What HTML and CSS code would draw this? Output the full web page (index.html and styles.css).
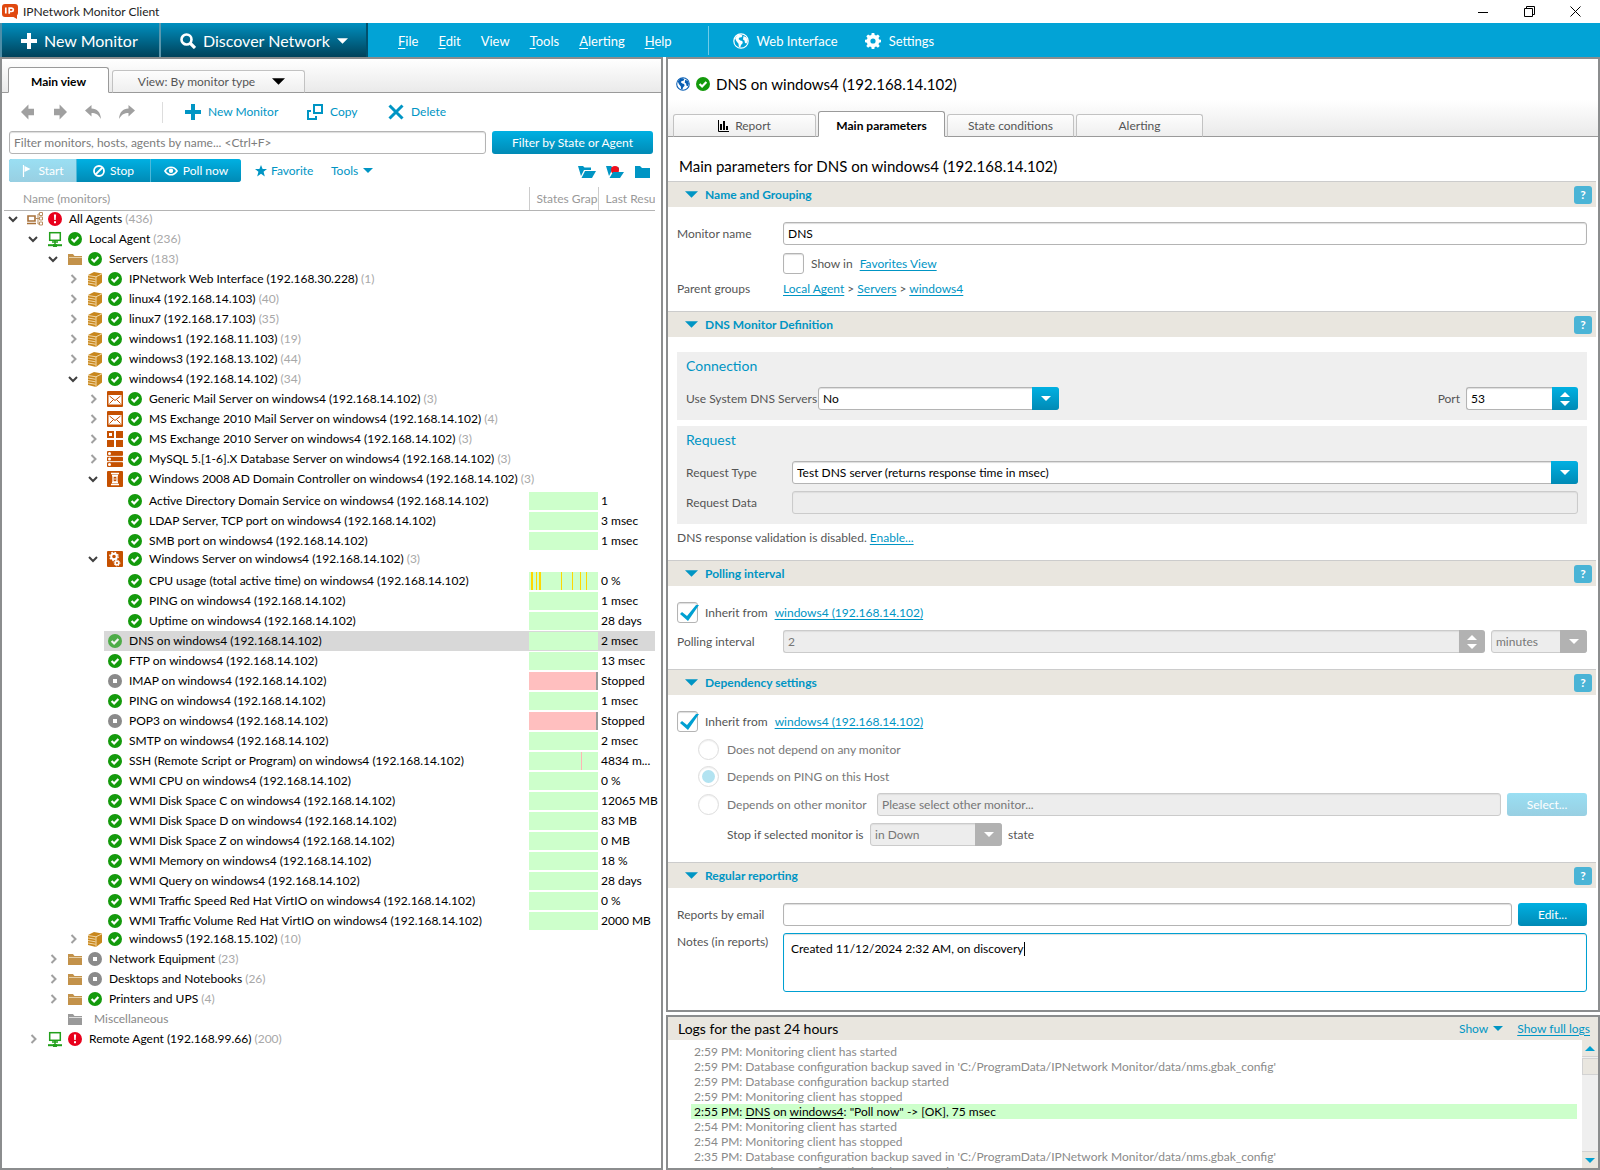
FILE: index.html
```html
<!DOCTYPE html>
<html lang="en">
<head>
<meta charset="utf-8">
<title>IPNetwork Monitor Client</title>
<link rel="stylesheet" href="styles.css">
</head>
<body>
<svg class="sprite" aria-hidden="true">
  <symbol id="i-ok" viewBox="0 0 14 14"><circle cx="7" cy="7" r="7" fill="#149a0c"/><path d="M3.6 7l2.5 2.5L10.4 5" fill="none" stroke="#fff" stroke-width="2.2"/></symbol>
  <symbol id="i-stop" viewBox="0 0 14 14"><circle cx="7" cy="7" r="7" fill="#8a8a8a"/><rect x="5" y="5" width="4" height="4" fill="#fff"/></symbol>
  <symbol id="i-alert" viewBox="0 0 14 14"><circle cx="7" cy="7" r="7" fill="#e8001c"/><path d="M5.9 2.6h2.2l-.4 5.4H6.300z" fill="#fff"/><rect x="6" y="9.200" width="2" height="2" fill="#fff"/></symbol>
  <symbol id="i-down" viewBox="0 0 10 10"><path d="M1 3l4 4 4-4" fill="none" stroke="#404040" stroke-width="2"/></symbol>
  <symbol id="i-right" viewBox="0 0 10 10"><path d="M3.500 1l4 4-4 4" fill="none" stroke="#a0a0a0" stroke-width="2"/></symbol>
  <symbol id="i-net" viewBox="0 0 16 16"><path d="M1 5h7v5H1zM0 12.500h9" fill="none" stroke="#a8713a" stroke-width="1.600"/><path d="M9 7.500h3M11 3v10M11 3h2M11 13h2" fill="none" stroke="#b98f60"/><path d="M12.500 1.500h3v3h-3zM12.500 6h3v3h-3zM12.500 11h3v3h-3z" fill="#fff" stroke="#b98f60"/></symbol>
  <symbol id="i-agent" viewBox="0 0 16 16"><rect x="2.700" y="1.700" width="10.600" height="7.600" fill="#fff" stroke="#22a01c" stroke-width="1.500"/><path d="M8 9.500v4M5 11h6" stroke="#22a01c" stroke-width="1.500"/><path d="M1 14.200h14" stroke="#22a01c" stroke-width="2"/><rect x="6" y="13" width="4" height="3" fill="#22a01c"/></symbol>
  <symbol id="i-folder" viewBox="0 0 16 16"><path d="M1 3h5l1.500 2H15v9H1z" fill="#c3924a"/><path d="M2 6.500h13" stroke="#e6cfa6"/></symbol>
  <symbol id="i-folder-gray" viewBox="0 0 16 16"><path d="M1 3h5l1.500 2H15v9H1z" fill="#9a9a9a"/><path d="M2 6.500h13" stroke="#ddd"/></symbol>
  <symbol id="i-host" viewBox="0 0 16 16"><path d="M1 4l6-3 8 1.500v9L9 16l-8-2z" fill="#c8871d"/><path d="M1 4.500l8 1.300L15 2.800M9 6v10M1 7l7.500 1.300M1 9.500l7.500 1.300M1 12l7.500 1.300" fill="none" stroke="#f5dfb4" stroke-width=".9"/></symbol>
  <symbol id="i-mail" viewBox="0 0 16 16"><rect width="16" height="16" rx="1" fill="#c55000"/><path d="M1.500 4h13v9.500h-13z" fill="#fff"/><path d="M2.500 5l5.500 4.500L13.500 5M2.500 12.500l4-4M13.500 12.500l-4-4" fill="none" stroke="#c55000"/></symbol>
  <symbol id="i-tiles" viewBox="0 0 16 16"><path d="M0 0h7v7H0zM9 0h7v7H9zM0 9h7v7H0zM9 9h7v7H9z" fill="#c55000"/><path d="M2 2h3v3H2z" fill="#fff"/></symbol>
  <symbol id="i-db" viewBox="0 0 16 16"><rect width="16" height="5" rx="1" fill="#c55000"/><rect y="5.600" width="16" height="4.800" rx="1" fill="#c55000"/><rect y="11" width="16" height="5" rx="1" fill="#c55000"/><circle cx="2.500" cy="2.500" r="1.500" fill="#fff"/><circle cx="2.500" cy="8" r="1.500" fill="#fff"/><circle cx="2.500" cy="13.500" r="1.500" fill="#fff"/><path d="M0 5.300h16M0 10.700h16" stroke="#fff" stroke-width=".8"/></symbol>
  <symbol id="i-dc" viewBox="0 0 16 16"><rect width="16" height="16" rx="1" fill="#c55000"/><path d="M4 2.500h8M5 4.500h6M5 11.500h6M4 13.500h8" stroke="#fff" stroke-width="1.400"/><path d="M6 5h4v6H6z" fill="none" stroke="#fff" stroke-width="1.300"/><path d="M7.200 8h1.600" stroke="#fff"/></symbol>
  <symbol id="i-cogs" viewBox="0 0 16 16"><rect width="16" height="16" rx="1" fill="#c55000"/><circle cx="7" cy="5.500" r="2.800" fill="none" stroke="#fff" stroke-width="2"/><circle cx="7" cy="5.500" r="4.200" fill="none" stroke="#fff" stroke-width="1.300" stroke-dasharray="1.600 1.700"/><circle cx="10" cy="12" r="1.800" fill="none" stroke="#fff" stroke-width="1.600"/><circle cx="10" cy="12" r="2.900" fill="none" stroke="#fff" stroke-dasharray="1.200 1.100"/></symbol>
  <symbol id="i-plus" viewBox="0 0 16 16"><path d="M6 0h4v6h6v4h-6v6H6v-6H0V6h6z" fill="currentColor"/></symbol>
  <symbol id="i-caret" viewBox="0 0 10 5"><path d="M0 0h10L5 5z" fill="currentColor"/></symbol>
  <symbol id="i-globe" viewBox="0 0 16 16"><circle cx="8" cy="8" r="7.200" fill="none" stroke="currentColor" stroke-width="1.200"/><path d="M2 5l3-3.500 3 0 1.500 1.200-1 1.500-2 .3-1 1.500 1.800 1.500 2 .5.5 2-1.800 2-.7 2.500-1.500-.8-.3-2.900L3.300 8zM10.500 3l3 1.500 1.300 3-1.300 3-1.500-.5-.5-2.500-1.500-1 .3-2z" fill="currentColor"/></symbol>
  <symbol id="i-gear" viewBox="0 0 16 16"><path d="M6.700 0h2.600l.4 2 1.500.6L12.900 1.500l1.800 1.800-1.200 1.700.6 1.500 2 .3v2.500l-2 .4-.6 1.500 1.200 1.700-1.800 1.800-1.700-1.200-1.500.6-.4 2H6.700l-.4-2-1.500-.6-1.700 1.200-1.800-1.800 1.200-1.700-.6-1.500-2-.4V6.800l2-.3.6-1.500L1.300 3.300l1.800-1.800 1.700 1.100L6.300 2zM8 5.400A2.600 2.600 0 1 0 8 10.600 2.600 2.600 0 1 0 8 5.400z" fill="currentColor" fill-rule="evenodd"/></symbol>
  <symbol id="i-arrow" viewBox="0 0 14 16"><path d="M0 8l8-8v4.500h6v7H8V16z" fill="currentColor"/></symbol>
  <symbol id="i-undo" viewBox="0 0 16 14"><path d="M0 5.500L6.500 0v3.500C12 3.500 15.500 7 16 14 13.500 9.500 10.500 8 6.500 8v3.500z" fill="currentColor"/></symbol>
</svg>

<div class="app">
  <header class="titlebar">
    <svg class="logo" viewBox="0 0 16 15" aria-hidden="true"><path d="M3 0h10a3 3 0 0 1 3 3v6a3 3 0 0 1-1 2.200V15l-3.500-2H3a3 3 0 0 1-3-3V3a3 3 0 0 1 3-3z" fill="#e0480f"/><path d="M3.800 3.500v6M7.200 9.700V4.200h2.500a1.500 1.500 0 0 1 0 3.300H7.200" fill="none" stroke="#fff" stroke-width="1.700"/></svg>
    <h1 class="app-title">IPNetwork Monitor Client</h1>
    <div class="win-buttons">
      <button type="button" aria-label="Minimize"><svg viewBox="0 0 11 11"><path d="M0 6.500h10" stroke="#000"/></svg></button>
      <button type="button" aria-label="Restore"><svg viewBox="0 0 11 11"><path d="M.5 2.500h8v8h-8zM2.500 2.500v-2h8v8h-2" fill="none" stroke="#000"/></svg></button>
      <button type="button" aria-label="Close"><svg viewBox="0 0 11 11"><path d="M.5.5l10 10M10.500.5l-10 10" stroke="#000"/></svg></button>
    </div>
  </header>

  <nav class="mainbar">
    <button type="button" class="big big-new"><svg class="s16"><use href="#i-plus"/></svg>New Monitor</button>
    <button type="button" class="big big-discover"><svg class="s16" viewBox="0 0 16 16"><circle cx="6.500" cy="6.500" r="5" fill="none" stroke="#fff" stroke-width="2.600"/><path d="M10 10l5 5" stroke="#fff" stroke-width="3.200"/></svg>Discover Network<svg class="caret-big"><use href="#i-caret"/></svg></button>
    <ul class="menu">
      <li><a href="#file"><u>F</u>ile</a></li>
      <li><a href="#edit"><u>E</u>dit</a></li>
      <li><a href="#view">View</a></li>
      <li><a href="#tools"><u>T</u>ools</a></li>
      <li><a href="#alerting"><u>A</u>lerting</a></li>
      <li><a href="#help"><u>H</u>elp</a></li>
    </ul>
    <div class="menu-extra">
      <a href="#web"><svg class="s16"><use href="#i-globe"/></svg>Web Interface</a>
      <a href="#settings"><svg class="s16"><use href="#i-gear"/></svg>Settings</a>
    </div>
  </nav>

  <main class="workspace">
    <section class="panel tree-panel">
      <div class="tabs tree-tabs">
        <button type="button" class="tab active">Main view</button>
        <button type="button" class="tab view-tab">View: By monitor type<svg class="caret-tab"><use href="#i-caret"/></svg></button>
      </div>
      <div class="toolbar">
        <div class="nav-icons">
          <button type="button" aria-label="Back"><svg class="w13"><use href="#i-arrow"/></svg></button>
          <button type="button" aria-label="Forward"><svg class="w13 flip"><use href="#i-arrow"/></svg></button>
          <button type="button" aria-label="Undo"><svg class="w16"><use href="#i-undo"/></svg></button>
          <button type="button" aria-label="Redo"><svg class="w16 flip"><use href="#i-undo"/></svg></button>
        </div>
        <button type="button" class="tool tool-new"><svg class="s16"><use href="#i-plus"/></svg>New Monitor</button>
        <button type="button" class="tool tool-copy"><svg class="s16" viewBox="0 0 16 16"><path d="M7 1h8v8H7z" fill="none" stroke="currentColor" stroke-width="2"/><path d="M4 7H1v8h8v-3" fill="none" stroke="currentColor" stroke-width="2"/></svg>Copy</button>
        <button type="button" class="tool"><svg class="s16" viewBox="0 0 16 16"><path d="M1.500 1.500l13 13M14.500 1.500l-13 13" stroke="currentColor" stroke-width="3"/></svg>Delete</button>
      </div>
      <div class="filter-row">
        <input class="field" type="text" aria-label="Filter monitors" placeholder="Filter monitors, hosts, agents by name... &lt;Ctrl+F&gt;">
        <button type="button" class="btn btn-filter">Filter by State or Agent</button>
      </div>
      <div class="action-row">
        <div class="btn-group">
          <button type="button" class="btn btn-start" disabled><svg class="s12" viewBox="0 0 12 12"><path d="M2.500 0v12" stroke="currentColor" stroke-width="1.200"/><path d="M3.500 1l6 3-6 3z" fill="currentColor"/></svg>Start</button>
          <button type="button" class="btn btn-stop"><svg class="s12" viewBox="0 0 12 12"><circle cx="6" cy="6" r="5" fill="none" stroke="currentColor" stroke-width="1.800"/><path d="M2.500 9.500l7-7" stroke="currentColor" stroke-width="1.800"/></svg>Stop</button>
          <button type="button" class="btn btn-poll"><svg class="eye" viewBox="0 0 14 10"><path d="M1 5c3-5 9-5 12 0-3 5-9 5-12 0z" fill="none" stroke="currentColor" stroke-width="1.700"/><circle cx="7" cy="4.700" r="2.200" fill="currentColor"/></svg>Poll now</button>
        </div>
        <button type="button" class="link-btn fav"><svg class="s12" viewBox="0 0 12 12"><path d="M6 0l1.600 4H12L8.600 6.800 9.800 11.500 6 8.800 2.200 11.500 3.400 6.800 0 4h4.400z" fill="currentColor"/></svg>Favorite</button>
        <button type="button" class="link-btn">Tools<svg class="caret-s"><use href="#i-caret"/></svg></button>
        <div class="folder-btns">
          <button type="button" aria-label="Expand"><svg viewBox="0 0 18 12"><path d="M0 0h5l1.500 1.500H13v2.500H6L3 10z" fill="#0095c4"/><path d="M7 5H18l-4 7H3.500z" fill="#0095c4"/></svg></button>
          <button type="button" aria-label="Expand problems"><svg viewBox="0 0 18 12"><path d="M0 0h5l1.500 1.500H13v2.500H6L3 10z" fill="#0095c4"/><circle cx="9" cy="4" r="4" fill="#f0101c"/><path d="M7 6H18l-4 6H3.500z" fill="#0095c4"/></svg></button>
          <button type="button" aria-label="Collapse"><svg viewBox="0 0 18 12"><path d="M1 0h5l2 2h8v10H1z" fill="#0095c4"/></svg></button>
        </div>
      </div>

      <table class="tree">
        <thead><tr><th class="c-name">Name (monitors)</th><th class="c-graph">States Graph</th><th class="c-last">Last Result</th></tr></thead>
        <tbody>
          <tr class="g"><td colspan="3"><div class="node l0"><button class="tw" aria-label="Toggle"><svg><use href="#i-down"/></svg></button><svg class="ic"><use href="#i-net"/></svg><svg class="st"><use href="#i-alert"/></svg>All Agents <span class="n">(436)</span></div></td></tr>
          <tr class="g"><td colspan="3"><div class="node l1"><button class="tw" aria-label="Toggle"><svg><use href="#i-down"/></svg></button><svg class="ic"><use href="#i-agent"/></svg><svg class="st"><use href="#i-ok"/></svg>Local Agent <span class="n">(236)</span></div></td></tr>
          <tr class="g"><td colspan="3"><div class="node l2"><button class="tw" aria-label="Toggle"><svg><use href="#i-down"/></svg></button><svg class="ic"><use href="#i-folder"/></svg><svg class="st"><use href="#i-ok"/></svg>Servers <span class="n">(183)</span></div></td></tr>
          <tr class="g"><td colspan="3"><div class="node l3"><button class="tw" aria-label="Toggle"><svg><use href="#i-right"/></svg></button><svg class="ic"><use href="#i-host"/></svg><svg class="st"><use href="#i-ok"/></svg>IPNetwork Web Interface (192.168.30.228) <span class="n">(1)</span></div></td></tr>
          <tr class="g"><td colspan="3"><div class="node l3"><button class="tw" aria-label="Toggle"><svg><use href="#i-right"/></svg></button><svg class="ic"><use href="#i-host"/></svg><svg class="st"><use href="#i-ok"/></svg>linux4 (192.168.14.103) <span class="n">(40)</span></div></td></tr>
          <tr class="g"><td colspan="3"><div class="node l3"><button class="tw" aria-label="Toggle"><svg><use href="#i-right"/></svg></button><svg class="ic"><use href="#i-host"/></svg><svg class="st"><use href="#i-ok"/></svg>linux7 (192.168.17.103) <span class="n">(35)</span></div></td></tr>
          <tr class="g"><td colspan="3"><div class="node l3"><button class="tw" aria-label="Toggle"><svg><use href="#i-right"/></svg></button><svg class="ic"><use href="#i-host"/></svg><svg class="st"><use href="#i-ok"/></svg>windows1 (192.168.11.103) <span class="n">(19)</span></div></td></tr>
          <tr class="g"><td colspan="3"><div class="node l3"><button class="tw" aria-label="Toggle"><svg><use href="#i-right"/></svg></button><svg class="ic"><use href="#i-host"/></svg><svg class="st"><use href="#i-ok"/></svg>windows3 (192.168.13.102) <span class="n">(44)</span></div></td></tr>
          <tr class="g"><td colspan="3"><div class="node l3"><button class="tw" aria-label="Toggle"><svg><use href="#i-down"/></svg></button><svg class="ic"><use href="#i-host"/></svg><svg class="st"><use href="#i-ok"/></svg>windows4 (192.168.14.102) <span class="n">(34)</span></div></td></tr>
          <tr class="g"><td colspan="3"><div class="node l4"><button class="tw" aria-label="Toggle"><svg><use href="#i-right"/></svg></button><svg class="ic"><use href="#i-mail"/></svg><svg class="st"><use href="#i-ok"/></svg>Generic Mail Server on windows4 (192.168.14.102) <span class="n">(3)</span></div></td></tr>
          <tr class="g"><td colspan="3"><div class="node l4"><button class="tw" aria-label="Toggle"><svg><use href="#i-right"/></svg></button><svg class="ic"><use href="#i-mail"/></svg><svg class="st"><use href="#i-ok"/></svg>MS Exchange 2010 Mail Server on windows4 (192.168.14.102) <span class="n">(4)</span></div></td></tr>
          <tr class="g"><td colspan="3"><div class="node l4"><button class="tw" aria-label="Toggle"><svg><use href="#i-right"/></svg></button><svg class="ic"><use href="#i-tiles"/></svg><svg class="st"><use href="#i-ok"/></svg>MS Exchange 2010 Server on windows4 (192.168.14.102) <span class="n">(3)</span></div></td></tr>
          <tr class="g"><td colspan="3"><div class="node l4"><button class="tw" aria-label="Toggle"><svg><use href="#i-right"/></svg></button><svg class="ic"><use href="#i-db"/></svg><svg class="st"><use href="#i-ok"/></svg>MySQL 5.[1-6].X Database Server on windows4 (192.168.14.102) <span class="n">(3)</span></div></td></tr>
          <tr class="g"><td colspan="3"><div class="node l4"><button class="tw" aria-label="Toggle"><svg><use href="#i-down"/></svg></button><svg class="ic"><use href="#i-dc"/></svg><svg class="st"><use href="#i-ok"/></svg>Windows 2008 AD Domain Controller on windows4 (192.168.14.102) <span class="n">(3)</span></div></td></tr>
          <tr><td><div class="node m4"><svg class="st"><use href="#i-ok"/></svg>Active Directory Domain Service on windows4 (192.168.14.102)</div></td><td><div class="bar"></div></td><td>1</td></tr>
          <tr><td><div class="node m4"><svg class="st"><use href="#i-ok"/></svg>LDAP Server, TCP port on windows4 (192.168.14.102)</div></td><td><div class="bar"></div></td><td>3 msec</td></tr>
          <tr><td><div class="node m4"><svg class="st"><use href="#i-ok"/></svg>SMB port on windows4 (192.168.14.102)</div></td><td><div class="bar"></div></td><td>1 msec</td></tr>
          <tr class="g"><td colspan="3"><div class="node l4"><button class="tw" aria-label="Toggle"><svg><use href="#i-down"/></svg></button><svg class="ic"><use href="#i-cogs"/></svg><svg class="st"><use href="#i-ok"/></svg>Windows Server on windows4 (192.168.14.102) <span class="n">(3)</span></div></td></tr>
          <tr><td><div class="node m4"><svg class="st"><use href="#i-ok"/></svg>CPU usage (total active time) on windows4 (192.168.14.102)</div></td><td><div class="bar"><svg viewBox="0 0 69 18"><path d="M2 0h2v18H2zM7 0h1v18H7zM10 0h2v18h-2zM32 0h1v18h-1zM43 0h1v18h-1zM51 0h1v18h-1zM57 0h1v18h-1z" fill="#ffd800"/></svg></div></td><td>0 %</td></tr>
          <tr><td><div class="node m4"><svg class="st"><use href="#i-ok"/></svg>PING on windows4 (192.168.14.102)</div></td><td><div class="bar"></div></td><td>1 msec</td></tr>
          <tr><td><div class="node m4"><svg class="st"><use href="#i-ok"/></svg>Uptime on windows4 (192.168.14.102)</div></td><td><div class="bar"></div></td><td>28 days</td></tr>
          <tr class="selected"><td><div class="node m3"><svg class="st"><use href="#i-ok"/></svg>DNS on windows4 (192.168.14.102)</div></td><td><div class="bar"></div></td><td>2 msec</td></tr>
          <tr><td><div class="node m3"><svg class="st"><use href="#i-ok"/></svg>FTP on windows4 (192.168.14.102)</div></td><td><div class="bar"></div></td><td>13 msec</td></tr>
          <tr><td><div class="node m3"><svg class="st"><use href="#i-stop"/></svg>IMAP on windows4 (192.168.14.102)</div></td><td><div class="bar stopped"></div></td><td>Stopped</td></tr>
          <tr><td><div class="node m3"><svg class="st"><use href="#i-ok"/></svg>PING on windows4 (192.168.14.102)</div></td><td><div class="bar"></div></td><td>1 msec</td></tr>
          <tr><td><div class="node m3"><svg class="st"><use href="#i-stop"/></svg>POP3 on windows4 (192.168.14.102)</div></td><td><div class="bar stopped"></div></td><td>Stopped</td></tr>
          <tr><td><div class="node m3"><svg class="st"><use href="#i-ok"/></svg>SMTP on windows4 (192.168.14.102)</div></td><td><div class="bar"></div></td><td>2 msec</td></tr>
          <tr><td><div class="node m3"><svg class="st"><use href="#i-ok"/></svg>SSH (Remote Script or Program) on windows4 (192.168.14.102)</div></td><td><div class="bar"><svg viewBox="0 0 69 18"><path d="M52 0h1v18h-1z" fill="#ffb4b4"/></svg></div></td><td>4834 m...</td></tr>
          <tr><td><div class="node m3"><svg class="st"><use href="#i-ok"/></svg>WMI CPU on windows4 (192.168.14.102)</div></td><td><div class="bar"></div></td><td>0 %</td></tr>
          <tr><td><div class="node m3"><svg class="st"><use href="#i-ok"/></svg>WMI Disk Space C on windows4 (192.168.14.102)</div></td><td><div class="bar"></div></td><td>12065 MB</td></tr>
          <tr><td><div class="node m3"><svg class="st"><use href="#i-ok"/></svg>WMI Disk Space D on windows4 (192.168.14.102)</div></td><td><div class="bar"></div></td><td>83 MB</td></tr>
          <tr><td><div class="node m3"><svg class="st"><use href="#i-ok"/></svg>WMI Disk Space Z on windows4 (192.168.14.102)</div></td><td><div class="bar"></div></td><td>0 MB</td></tr>
          <tr><td><div class="node m3"><svg class="st"><use href="#i-ok"/></svg>WMI Memory on windows4 (192.168.14.102)</div></td><td><div class="bar"></div></td><td>18 %</td></tr>
          <tr><td><div class="node m3"><svg class="st"><use href="#i-ok"/></svg>WMI Query on windows4 (192.168.14.102)</div></td><td><div class="bar"></div></td><td>28 days</td></tr>
          <tr><td><div class="node m3"><svg class="st"><use href="#i-ok"/></svg>WMI Traffic Speed Red Hat VirtIO on windows4 (192.168.14.102)</div></td><td><div class="bar"></div></td><td>0 %</td></tr>
          <tr><td><div class="node m3"><svg class="st"><use href="#i-ok"/></svg>WMI Traffic Volume Red Hat VirtIO on windows4 (192.168.14.102)</div></td><td><div class="bar"></div></td><td>2000 MB</td></tr>
          <tr class="g"><td colspan="3"><div class="node l3"><button class="tw" aria-label="Toggle"><svg><use href="#i-right"/></svg></button><svg class="ic"><use href="#i-host"/></svg><svg class="st"><use href="#i-ok"/></svg>windows5 (192.168.15.102) <span class="n">(10)</span></div></td></tr>
          <tr class="g"><td colspan="3"><div class="node l2"><button class="tw" aria-label="Toggle"><svg><use href="#i-right"/></svg></button><svg class="ic"><use href="#i-folder"/></svg><svg class="st"><use href="#i-stop"/></svg>Network Equipment <span class="n">(23)</span></div></td></tr>
          <tr class="g"><td colspan="3"><div class="node l2"><button class="tw" aria-label="Toggle"><svg><use href="#i-right"/></svg></button><svg class="ic"><use href="#i-folder"/></svg><svg class="st"><use href="#i-stop"/></svg>Desktops and Notebooks <span class="n">(26)</span></div></td></tr>
          <tr class="g"><td colspan="3"><div class="node l2"><button class="tw" aria-label="Toggle"><svg><use href="#i-right"/></svg></button><svg class="ic"><use href="#i-folder"/></svg><svg class="st"><use href="#i-ok"/></svg>Printers and UPS <span class="n">(4)</span></div></td></tr>
          <tr class="g empty"><td colspan="3"><div class="node l2"><span class="tw"></span><svg class="ic"><use href="#i-folder-gray"/></svg>Miscellaneous</div></td></tr>
          <tr class="g"><td colspan="3"><div class="node l1"><button class="tw" aria-label="Toggle"><svg><use href="#i-right"/></svg></button><svg class="ic"><use href="#i-agent"/></svg><svg class="st"><use href="#i-alert"/></svg>Remote Agent (192.168.99.66) <span class="n">(200)</span></div></td></tr>
        </tbody>
      </table>
    </section>

    <div class="right">
      <section class="panel details">
        <div class="object-title"><svg class="globe"><use href="#i-globe"/></svg><svg class="st"><use href="#i-ok"/></svg><h2>DNS on windows4 (192.168.14.102)</h2></div>
        <div class="tabs detail-tabs">
          <button type="button" class="tab report-tab"><svg class="s11" viewBox="0 0 11 12"><path d="M.5 0v11.500H11" fill="none" stroke="#000"/><path d="M2 4h2v6H2zM5 1h2v9H5zM8 6h2v4H8z"/></svg>Report</button>
          <button type="button" class="tab active">Main parameters</button>
          <button type="button" class="tab">State conditions</button>
          <button type="button" class="tab">Alerting</button>
        </div>
        <h3 class="form-title">Main parameters for DNS on windows4 (192.168.14.102)</h3>

        <div class="sec-head"><button type="button" class="sec-toggle"><svg class="caret-sec"><use href="#i-caret"/></svg>Name and Grouping</button><button type="button" class="help" aria-label="Help">?</button></div>
        <div class="sec-body">
          <div class="row"><label for="mon-name">Monitor name</label><input id="mon-name" class="field" type="text" value="DNS"></div>
          <div class="row gap8"><span></span><div class="inline"><input type="checkbox" id="fav" class="check"><label for="fav">Show in</label><a href="#favorites">Favorites View</a></div></div>
          <div class="row gap6 text-row"><span>Parent groups</span><div><a href="#local">Local Agent</a> &gt; <a href="#servers">Servers</a> &gt; <a href="#windows4">windows4</a></div></div>
        </div>

        <div class="sec-head"><button type="button" class="sec-toggle"><svg class="caret-sec"><use href="#i-caret"/></svg>DNS Monitor Definition</button><button type="button" class="help" aria-label="Help">?</button></div>
        <div class="sec-body">
          <div class="box">
            <h4>Connection</h4>
            <div class="conn">
              <label for="sysdns" class="sysdns-label">Use System DNS Servers</label>
              <div class="combo combo-dns"><select id="sysdns"><option>No</option></select><span class="arrow"><svg class="caret-s"><use href="#i-caret"/></svg></span></div>
              <label for="port" class="port-label">Port</label>
              <div class="spin spin-port"><input id="port" type="text" inputmode="numeric" value="53"><button type="button" aria-label="Change port"><svg class="caret-s up"><use href="#i-caret"/></svg><svg class="caret-s"><use href="#i-caret"/></svg></button></div>
            </div>
          </div>
          <div class="box gap6">
            <h4>Request</h4>
            <div class="row"><label for="rtype">Request Type</label><div class="combo"><select id="rtype"><option>Test DNS server (returns response time in msec)</option></select><span class="arrow"><svg class="caret-s"><use href="#i-caret"/></svg></span></div></div>
            <div class="row gap7"><label for="rdata">Request Data</label><input id="rdata" class="field" type="text" disabled></div>
          </div>
          <p class="note">DNS response validation is disabled. <a href="#enable">Enable...</a></p>
        </div>

        <div class="sec-head"><button type="button" class="sec-toggle"><svg class="caret-sec"><use href="#i-caret"/></svg>Polling interval</button><button type="button" class="help" aria-label="Help">?</button></div>
        <div class="sec-body even">
          <div class="inline"><input type="checkbox" id="inh1" class="check" checked><label for="inh1">Inherit from</label><a href="#windows4">windows4 (192.168.14.102)</a></div>
          <div class="row gap7"><label for="poll">Polling interval</label>
            <div class="poll">
              <div class="spin off"><input id="poll" type="text" value="2" disabled><button type="button" disabled aria-label="Change interval"><svg class="caret-s up"><use href="#i-caret"/></svg><svg class="caret-s"><use href="#i-caret"/></svg></button></div>
              <div class="combo off combo-unit"><select aria-label="Interval unit" disabled><option>minutes</option></select><span class="arrow"><svg class="caret-s"><use href="#i-caret"/></svg></span></div>
            </div>
          </div>
        </div>

        <div class="sec-head"><button type="button" class="sec-toggle"><svg class="caret-sec"><use href="#i-caret"/></svg>Dependency settings</button><button type="button" class="help" aria-label="Help">?</button></div>
        <div class="sec-body even">
          <div class="inline"><input type="checkbox" id="inh2" class="check" checked><label for="inh2">Inherit from</label><a href="#windows4">windows4 (192.168.14.102)</a></div>
          <div class="dep">
            <div class="dep-row gap7"><input type="radio" name="dep" id="d1" disabled><label for="d1">Does not depend on any monitor</label></div>
            <div class="dep-row gap6"><input type="radio" name="dep" id="d2" checked disabled><label for="d2">Depends on PING on this Host</label></div>
            <div class="dep-row gap6"><input type="radio" name="dep" id="d3" disabled><label for="d3" class="other-label">Depends on other monitor</label><input class="field other" type="text" aria-label="Other monitor" value="Please select other monitor..." disabled><button type="button" class="btn btn-select" disabled>Select...</button></div>
            <div class="stop-row gap7"><label for="stopif" class="stop-label">Stop if selected monitor is</label><div class="combo off combo-state"><select id="stopif" disabled><option>in Down</option></select><span class="arrow"><svg class="caret-s"><use href="#i-caret"/></svg></span></div><span>state</span></div>
          </div>
        </div>

        <div class="sec-head"><button type="button" class="sec-toggle"><svg class="caret-sec"><use href="#i-caret"/></svg>Regular reporting</button><button type="button" class="help" aria-label="Help">?</button></div>
        <div class="sec-body last">
          <div class="row"><label for="email">Reports by email</label><div class="poll"><input id="email" class="field" type="text"><button type="button" class="btn btn-edit">Edit...</button></div></div>
          <div class="row gap7 notes-row"><label for="notes">Notes (in reports)</label><div class="notes"><textarea id="notes">Created 11/12/2024 2:32 AM, on discovery</textarea><span class="cursor"></span></div></div>
        </div>
      </section>

      <section class="panel logs">
        <div class="logs-head"><h2>Logs for the past 24 hours</h2><button type="button" class="link-btn">Show<svg class="caret-s"><use href="#i-caret"/></svg></button><a href="#logs">Show full logs</a></div>
        <div class="logs-body">
          <ul class="log-list">
            <li>2:59 PM: Monitoring client has started</li>
            <li>2:59 PM: Database configuration backup saved in 'C:/ProgramData/IPNetwork Monitor/data/nms.gbak_config'</li>
            <li>2:59 PM: Database configuration backup started</li>
            <li>2:59 PM: Monitoring client has stopped</li>
            <li class="hit">2:55 PM: <a href="#dns">DNS</a> on <a href="#windows4">windows4</a>: "Poll now" -&gt; [OK], 75 msec</li>
            <li>2:54 PM: Monitoring client has started</li>
            <li>2:54 PM: Monitoring client has stopped</li>
            <li>2:35 PM: Database configuration backup saved in 'C:/ProgramData/IPNetwork Monitor/data/nms.gbak_config'</li>
            <li>2:34 PM: Database configuration backup started</li>
          </ul>
          <div class="scrollbar">
            <button type="button" aria-label="Scroll up"><svg class="caret-s up"><use href="#i-caret"/></svg></button>
            <span class="thumb"></span>
            <button type="button" aria-label="Scroll down" class="sb-down"><svg class="caret-s"><use href="#i-caret"/></svg></button>
          </div>
        </div>
      </section>
    </div>
  </main>
</div>
</body>
</html>
```
FILE: styles.css
```css
:root {
  --blue: #0095c4;
  --bar: #02a3d6;
  --frame: #8b8d8e;
  --beige: #e9e6df;
  --btn: linear-gradient(#00b0e2, #008ab5);
}
* { box-sizing: border-box; }
body {
  margin: 0;
  font: 12px/18px Lato, "Open Sans", sans-serif;
  color: #555;
  background: #fff;
}
h1, h2, h3, h4, p, ul { margin: 0; padding: 0; font-weight: 400; }
ul { list-style: none; }
button, input, select, textarea { font: inherit; color: inherit; margin: 0; padding: 0; }
button { border: 0; background: none; cursor: pointer; white-space: nowrap; }
svg { display: block; flex: none; }
a { color: var(--blue); text-underline-offset: 2px; }
.sprite { position: absolute; width: 0; height: 0; }
.s16 { width: 16px; height: 16px; }
.s12 { width: 12px; height: 12px; }
.s11 { width: 11px; height: 12px; }
.caret-s { width: 10px; height: 5px; }
.up { transform: rotate(180deg); }
.flip { transform: scaleX(-1); }

.app { height: 100vh; display: grid; grid-template-rows: 23px 34px minmax(0, 1fr); }

.titlebar { display: flex; align-items: center; padding: 0 2px; color: #222; }
.logo { width: 16px; height: 15px; margin-right: 5px; }
.app-title { flex: 1; font-size: 12px; }
.win-buttons { display: flex; }
.win-buttons button { width: 46px; height: 21px; display: grid; place-items: center; }
.win-buttons svg { width: 11px; height: 11px; }

.mainbar { display: flex; background: var(--bar); color: #fff; }
.big {
  display: flex; align-items: center; gap: 7px; padding-top: 2px; font-size: 16px;
  background: linear-gradient(#008fbf, #00425a);
  border: solid #00506d; border-width: 0 2px 0 0;
}
.big-new { width: 161px; padding-left: 19px; border-right-color: #5b97ad; border-left: 2px solid #4d8ea8; }
.big-discover { width: 207px; padding-left: 19px; }
.caret-big { width: 11px; height: 6px; }
.menu { display: flex; align-items: center; gap: 20px; padding: 1px 36px 0 30px; font-size: 13px; }
.mainbar a { color: #fff; text-decoration: none; }
.menu-extra { display: flex; gap: 27px; margin: 3px 0 2px; padding-left: 24px; border-left: 1px solid #6fcbe8; font-size: 13px; }
.menu-extra a { display: flex; align-items: center; gap: 8px; }

.workspace { display: grid; grid-template-columns: minmax(0, 663fr) minmax(0, 934fr); gap: 3px; min-height: 0; }
.right { display: grid; grid-template-rows: auto minmax(0, 1fr); gap: 3px; min-height: 0; }
.panel { border: 2px solid var(--frame); min-width: 0; overflow: hidden; }

.tabs { display: flex; align-items: flex-end; gap: 2px; background: linear-gradient(#fff, #e9e9e9); box-shadow: inset 0 -1px #9a9a9a; }
.tab {
  height: 23px; border: 1px solid #c2c2c2; border-bottom-color: #9a9a9a; border-radius: 3px 3px 0 0;
  background: linear-gradient(#fdfdfd, #efefef); color: #555;
  display: flex; align-items: center; justify-content: center; gap: 6px;
}
.tab.active { height: 26px; padding-top: 3px; background: #fff; border-color: #9a9a9a; border-bottom-color: #fff; color: #000; font-weight: 700; }
.tree-tabs { height: 34px; padding-left: 6px; }
.tree-tabs .active { width: 101px; }
.view-tab { width: 193px; gap: 17px; padding-left: 6px; margin-left: 1px; }
.caret-tab { width: 13px; height: 7px; color: #000; }

.toolbar { height: 38px; display: flex; align-items: center; padding-left: 19px; color: var(--blue); }
.nav-icons { display: flex; align-items: center; gap: 18px; width: 142px; height: 21px; border-right: 1px solid #ddd; color: #a0a0a0; margin-right: 22px; }
.nav-icons button:first-child { margin-right: 2px; }
.w13 { width: 13px; height: 16px; }
.w16 { width: 16px; height: 14px; }
.tool { display: flex; align-items: center; gap: 7px; }
.tool-new { width: 122px; }
.tool-copy { width: 81px; }

.field, .combo select, .spin input, textarea {
  height: 23px; width: 100%; min-width: 0; border: 1px solid #b4b4b4; border-radius: 3px;
  background: #fff; color: #000; padding: 0 4px; box-shadow: inset 0 1px 1px #ddd; outline: 0;
}
.field:disabled, .off select, .off input { background: #ededed; border-color: #cbcbcb; color: #777; opacity: 1; }
.field::placeholder { color: #7c7c7c; opacity: 1; }
.btn { height: 23px; border-radius: 3px; background: var(--btn); color: #fff; display: flex; align-items: center; justify-content: center; gap: 5px; flex: none; }
.btn:disabled { background: linear-gradient(#9adff3, #98cfe2); }
.filter-row { display: flex; gap: 6px; padding: 0 8px 0 7px; }
.btn-filter { width: 161px; }

.action-row { display: flex; align-items: center; padding: 5px 9px 5px 7px; }
.btn-group { display: flex; gap: 1px; margin-right: 14px; background: #4db8d9; border-radius: 3px; }
.btn-start { width: 67px; border-radius: 3px 0 0 3px; }
.btn-stop { width: 73px; border-radius: 0; }
.btn-poll { width: 90px; border-radius: 0 3px 3px 0; }
.eye { width: 14px; height: 10px; }
.link-btn { display: flex; align-items: center; gap: 5px; color: var(--blue); }
.fav { gap: 4px; width: 76px; }
.folder-btns { display: flex; gap: 10px; margin-left: auto; padding-top: 2px; }
.folder-btns svg { width: 18px; height: 12px; }

.tree { width: calc(100% - 8px); margin-left: 2px; border-collapse: collapse; table-layout: fixed; color: #000; }
.tree th { height: 23px; padding: 1px 0 0; border-bottom: 1px solid #b4b4b4; font-weight: 400; text-align: left; color: #999; white-space: nowrap; overflow: hidden; }
.tree .c-name { padding-left: 19px; }
.tree .c-graph { width: 69px; padding-left: 7px; border-left: 1px solid #ccc; }
.tree .c-last { width: 57px; padding-left: 7px; border-left: 1px solid #ccc; }
.tree td { padding: 0; height: 20px; white-space: nowrap; }
.tree td:nth-child(3) { padding-left: 3px; }
.node { display: flex; align-items: center; height: 20px; white-space: pre; }
.g .node { padding-bottom: 3px; }
.tw { width: 14px; height: 16px; margin-right: 7px; display: grid; place-items: center; }
.tw svg { width: 10px; height: 10px; }
.ic { width: 16px; height: 16px; margin-right: 5px; }
.st { width: 14px; height: 14px; margin-right: 7px; }
.n { color: #a8a8a8; }
.empty .node { color: #888; }
.empty .ic { margin-right: 11px; }
.l0 { padding-left: 2px; }
.l1 { padding-left: 22px; }
.l2 { padding-left: 42px; }
.l3 { padding-left: 62px; }
.l4 { padding-left: 82px; }
.m3 { margin-left: 100px; padding-left: 4px; }
.m4 { margin-left: 120px; padding-left: 4px; }
.bar { height: 18px; background: #cdffcb; }
.bar svg { width: 69px; height: 18px; }
.bar.stopped { background: #ffbfbf; border-right: 2px solid #999; }
.selected .node, .selected td:nth-child(n+2) { background: #d8d8d8; }
.selected .st { opacity: .7; }

.object-title { display: flex; align-items: center; height: 41px; padding: 8px 0 0 8px; color: #000; }
.object-title h2, .form-title { font-size: 15px; line-height: 22px; }
.globe { width: 14px; height: 14px; color: #0a5fb4; margin-right: 6px; }
.object-title .st { margin-right: 6px; }
.detail-tabs { height: 37px; padding-left: 5px; }
.detail-tabs .tab { width: 127px; }
.detail-tabs .report-tab { width: 143px; }
.form-title { color: #000; padding: 18px 0 4px 11px; }

.sec-head { display: flex; align-items: center; justify-content: space-between; height: 26px; margin-right: 2px; padding: 0 4px 0 17px; background: var(--beige); border-top: 1px solid #ccc; }
.sec-toggle { display: flex; align-items: center; gap: 7px; color: var(--blue); font-weight: 700; }
.caret-sec { width: 13px; height: 7px; }
.help { width: 18px; height: 18px; border-radius: 3px; background: #4ab4d6; color: #fff; font-weight: 700; line-height: 18px; }
.sec-body { padding: 15px 11px 13px 9px; }
.sec-body.even { padding-top: 16px; padding-bottom: 16px; }
.sec-body.last { padding-bottom: 18px; }
.row { display: grid; grid-template-columns: 106px minmax(0, 1fr); align-items: center; }
.gap6 { margin-top: 6px; }
.gap7 { margin-top: 7px; }
.gap8 { margin-top: 8px; }
.inline { display: flex; align-items: center; gap: 7px; height: 21px; }
.check, .dep input[type="radio"] {
  appearance: none; width: 21px; height: 21px; flex: none; border: 1px solid #b4b4b4; border-radius: 3px;
  background: #fff; box-shadow: inset 0 1px 1px #ddd; display: grid; place-items: center;
}
.check:checked::before {
  content: ""; width: 21px; height: 21px; background: #00a0d2;
  clip-path: polygon(2px 11px, 4px 9px, 9px 13px, 18px 2px, 21px 2px, 10px 18px);
}
.dep input[type="radio"] { border-radius: 50%; border-color: #ddd; box-shadow: inset 0 1px 1px #eee; margin-right: 8px; }
.dep input[type="radio"]:checked::before { content: ""; width: 13px; height: 13px; border-radius: 50%; background: #b2e3f1; }

.box { background: #efefef; padding: 0 9px 10px; }
.box h4 { height: 35px; padding-top: 5px; font-size: 14px; color: var(--blue); }
.conn { display: flex; align-items: center; gap: 6px; white-space: nowrap; }
.sysdns-label { flex: none; width: 126px; }
.combo, .spin { position: relative; width: 100%; display: flex; }
.combo select { appearance: none; }
.combo .arrow { position: absolute; right: 0; top: 0; width: 27px; height: 23px; display: grid; place-items: center; background: var(--btn); color: #fff; border-radius: 0 3px 3px 0; pointer-events: none; }
.spin input { border-right: 0; border-radius: 3px 0 0 3px; }
.spin button { width: 26px; height: 23px; flex: none; display: grid; place-content: center; gap: 4px; background: var(--btn); color: #fff; border-radius: 0 3px 3px 0; }
.off .arrow, .off button { background: #b2b2b2; }
.combo-dns { width: 241px; }
.port-label { margin-left: auto; }
.spin-port { width: 112px; }
.note { margin-top: 5px; }
.poll { display: flex; gap: 6px; }
.combo-unit { width: 96px; flex: none; }
.dep { margin-left: 21px; color: #777; }
.dep-row, .stop-row { display: flex; align-items: center; }
.other-label { width: 150px; flex: none; }
.btn-select { width: 80px; margin-left: 6px; }
.stop-row { margin-left: 29px; gap: 6px; color: #555; white-space: nowrap; }
.stop-label { flex: none; width: 137px; }
.combo-state { width: 132px; }
.btn-edit { width: 69px; }
.notes-row { align-items: start; }
.notes { position: relative; }
textarea { display: block; height: 59px; padding: 6px 7px; border-color: #00a0d2; resize: none; }
.cursor { position: absolute; left: 241px; top: 9px; width: 1px; height: 14px; background: #000; }

.logs { display: grid; grid-template-rows: 23px minmax(0, 1fr); }
.logs-head { display: flex; align-items: center; padding: 0 8px 0 10px; background: var(--beige); }
.logs-head h2 { flex: 1; font-size: 14px; color: #000; }
.logs-head .link-btn { margin-right: 14px; }
.logs-body { display: grid; grid-template-columns: minmax(0, 1fr) 16px; overflow: hidden; }
.log-list { padding: 4px 5px 0 23px; line-height: 15px; color: #8a8a8a; }
.log-list li { padding-left: 3px; white-space: nowrap; }
.log-list .hit { background: #cdffcb; color: #000; }
.hit a { color: #000; }
.scrollbar { display: flex; flex-direction: column; min-height: 0; height: 100%; background: #efefef; color: #00a0d2; }
.logs-body { grid-template-rows: minmax(0, 1fr); }
.scrollbar button { height: 17px; flex: none; display: grid; place-items: center; background: var(--beige); border-bottom: 1px solid #d2d2d2; }
.thumb { height: 17px; flex: none; margin-top: 1px; background: var(--beige); border: solid #d2d2d2; border-width: 1px 0 1px 1px; }
.scrollbar .sb-down { margin-top: auto; border-bottom: 0; border-top: 1px solid #d2d2d2; }
```
